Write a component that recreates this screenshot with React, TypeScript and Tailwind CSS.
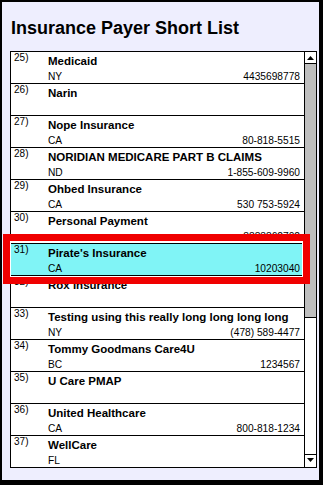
import React from "react";

type Payer = {
  n: number;
  name: string;
  state?: string;
  phone?: string;
};

const payers: Payer[] = [
  { n: 25, name: "Medicaid", state: "NY", phone: "4435698778" },
  { n: 26, name: "Narin" },
  { n: 27, name: "Nope Insurance", state: "CA", phone: "80-818-5515" },
  { n: 28, name: "NORIDIAN MEDICARE PART B CLAIMS", state: "ND", phone: "1-855-609-9960" },
  { n: 29, name: "Ohbed Insurance", state: "CA", phone: "530 753-5924" },
  { n: 30, name: "Personal Payment", phone: "8883862702" },
  { n: 31, name: "Pirate's Insurance", state: "CA", phone: "10203040" },
  { n: 32, name: "Rox Insurance" },
  { n: 33, name: "Testing using this really long long long long", state: "NY", phone: "(478) 589-4477" },
  { n: 34, name: "Tommy Goodmans Care4U", state: "BC", phone: "1234567" },
  { n: 35, name: "U Care PMAP" },
  { n: 36, name: "United Healthcare", state: "CA", phone: "800-818-1234" },
  { n: 37, name: "WellCare", state: "FL" },
];

const SELECTED = 31;

function Arrow({ down }: { down?: boolean }) {
  return (
    <svg width="7" height="4" viewBox="0 0 7 4">
      <polygon points={down ? "0,0 7,0 3.5,4" : "0,4 7,4 3.5,0"} fill="#000" />
    </svg>
  );
}

function PayerRow({ p, last }: { p: Payer; last: boolean }) {
  const selected = p.n === SELECTED;
  return (
    <div
      className={`flex shrink-0 ${last ? "h-[31px]" : "h-[32px] border-b border-black"} ${
        selected ? "bg-[#80f4f6]" : "bg-white"
      }`}
    >
      <div className="w-[37px] shrink-0 pl-[3px] pt-[1px] text-[10px] leading-[10px]">{p.n})</div>
      <div className="min-w-0 flex-1 pr-1 pt-[1.5px]">
        <div className="whitespace-nowrap text-[11.5px] font-bold leading-[14px]">{p.name}</div>
        <div className="mt-[3px] flex justify-between text-[10.2px] leading-[12px]">
          <span>{p.state}</span>
          <span>{p.phone}</span>
        </div>
      </div>
    </div>
  );
}

export default function App() {
  return (
    <div className="relative box-border h-[485px] w-[323px] border-b-[5px] border-l-2 border-r-4 border-t-2 border-black bg-[#eeeefe] pl-2 pr-[2px] pt-[15px] font-['Liberation_Sans',Arial,sans-serif] text-black">
      <h1 className="ml-[1px] text-[18px] font-bold leading-[22px]">Insurance Payer Short List</h1>

      <div className="mt-3 flex h-[417px] w-[307px] border border-black bg-white">
        <div className="flex w-[293px] flex-col">
          {payers.map((p, i) => (
            <PayerRow key={p.n} p={p} last={i === payers.length - 1} />
          ))}
        </div>

        <div className="flex w-[12px] flex-col border-l border-black">
          <div className="flex h-[12px] items-center justify-center border-b border-black pt-[1px]">
            <Arrow />
          </div>
          <div className="h-[254px] border-b border-black bg-[#bebebe]" />
          <div className="flex-1" />
          <div className="flex h-[13px] items-center justify-center border-t border-black pb-[2px]">
            <Arrow down />
          </div>
        </div>
      </div>

      {/* red callout around the selected payer */}
      <div className="absolute left-[1px] top-[232px] h-[50px] w-[307px] border-[7px] border-[#f00000]">
        <div className="h-full w-full border border-white" />
      </div>
    </div>
  );
}
